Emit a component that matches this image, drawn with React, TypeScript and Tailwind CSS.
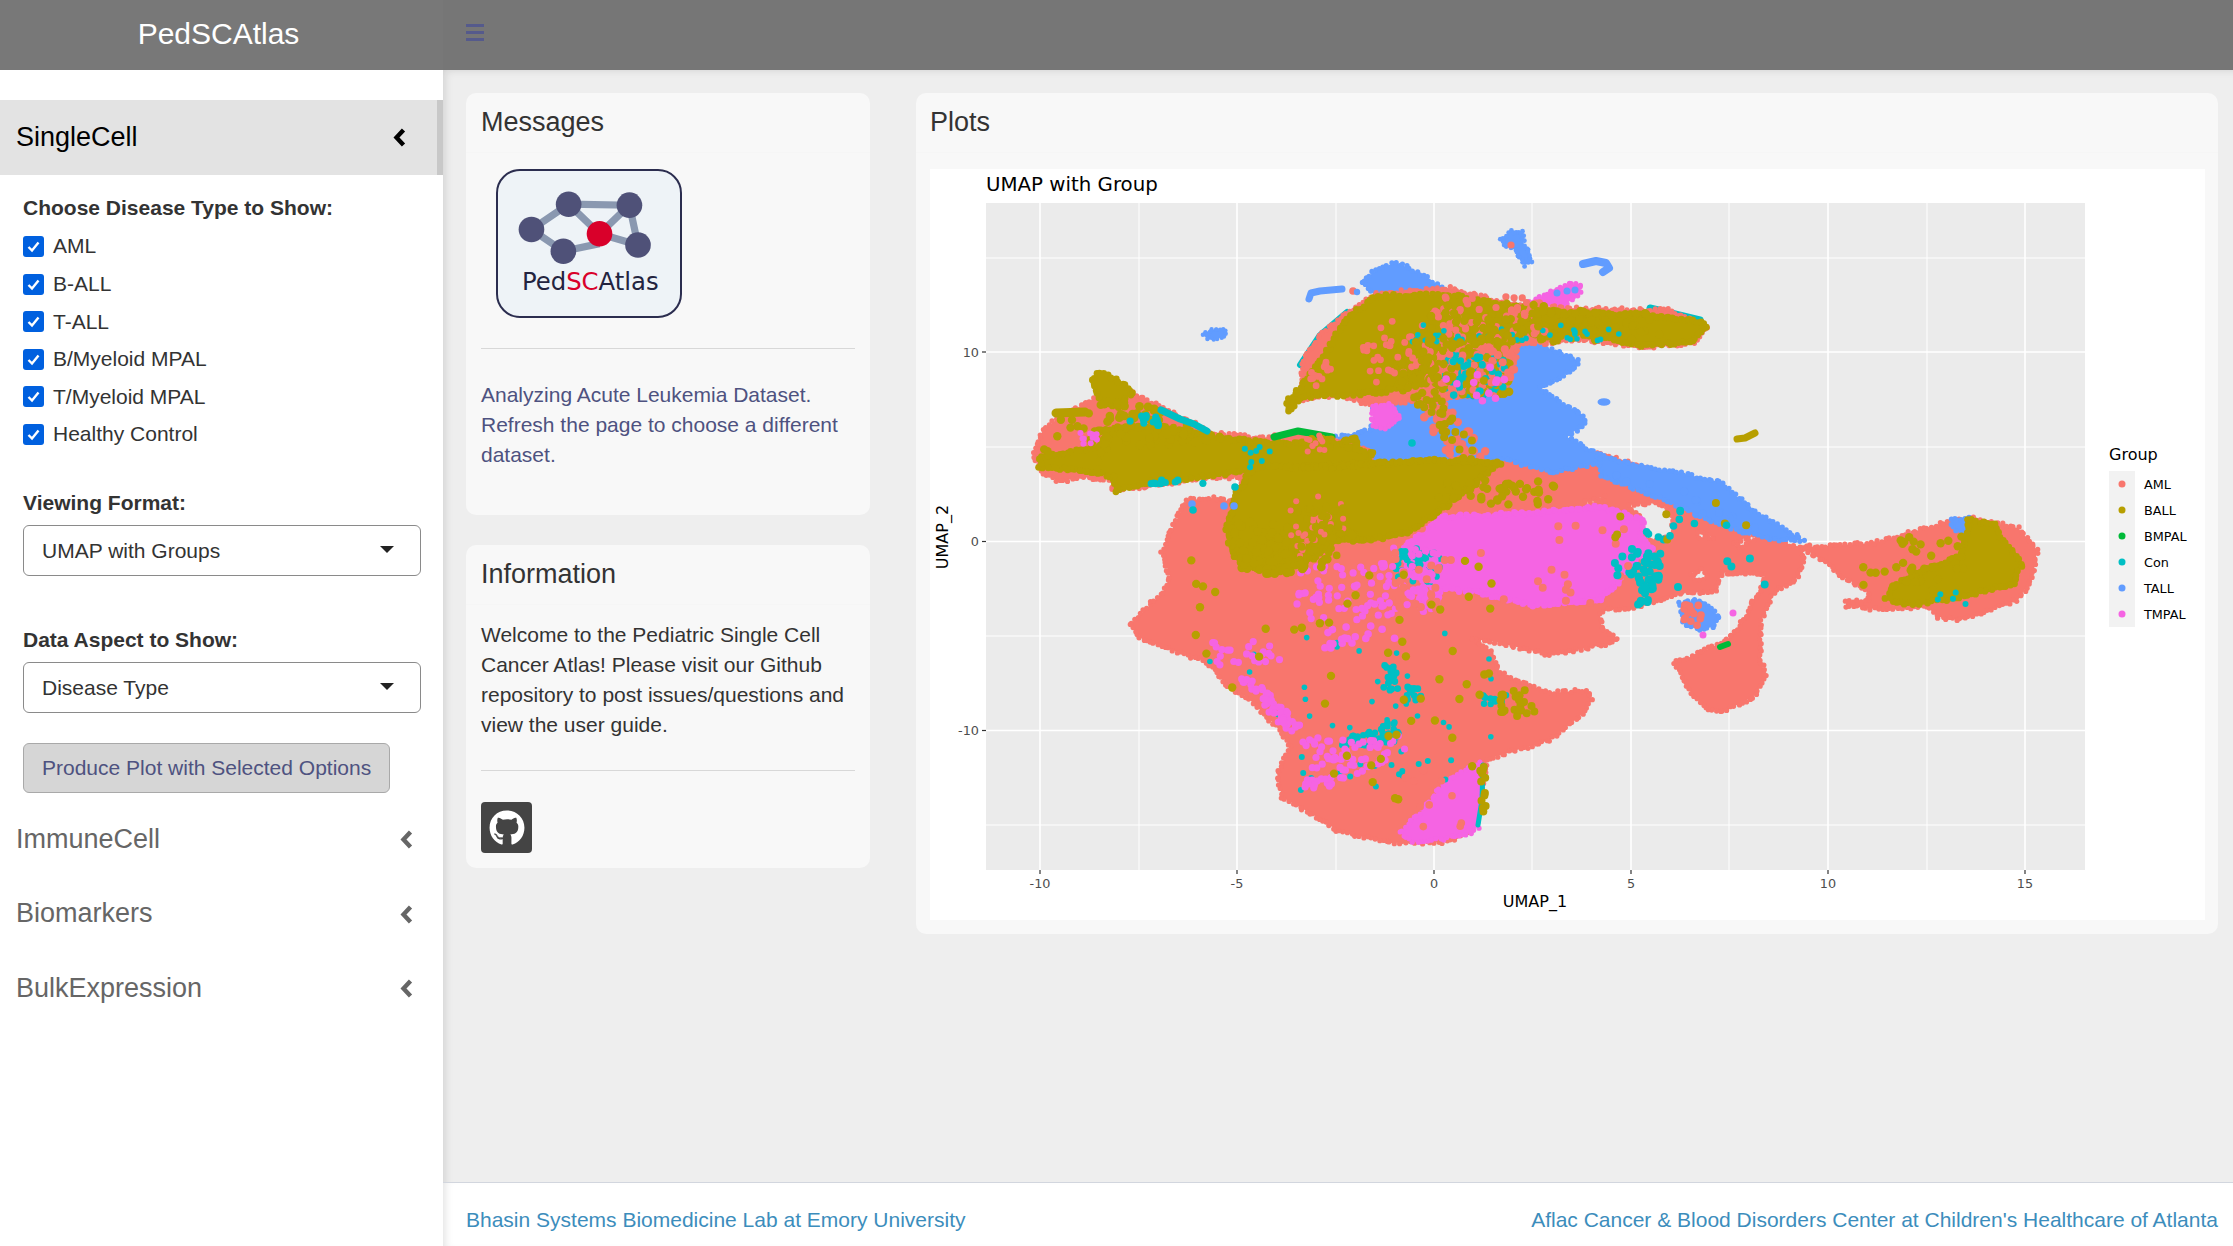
import React from "react";
import { FaGithub } from "react-icons/fa";

type Pt = [number, number];
const CORAL = "#F8766D";
const OLIVE = "#B79F00";
const GREEN = "#00BA38";
const TEAL = "#00BFC4";
const BLUE = "#619CFF";
const PINK = "#F564E3";

function rng(seed: number) {
  let a = seed;
  return () => {
    a |= 0;
    a = (a + 0x6d2b79f5) | 0;
    let t = Math.imul(a ^ (a >>> 15), 1 | a);
    t = (t + Math.imul(t ^ (t >>> 7), 61 | t)) ^ t;
    return ((t ^ (t >>> 14)) >>> 0) / 4294967296;
  };
}
const rand = rng(20240);
const inside = (p: Pt, poly: Pt[]) => {
  let c = false;
  for (let i = 0, j = poly.length - 1; i < poly.length; j = i++) {
    const [xi, yi] = poly[i];
    const [xj, yj] = poly[j];
    if (yi > p[1] !== yj > p[1] && p[0] < ((xj - xi) * (p[1] - yi)) / (yj - yi) + xi) c = !c;
  }
  return c;
};
const rect = (x0: number, y0: number, x1: number, y1: number): Pt[] => [[x0, y0], [x1, y0], [x1, y1], [x0, y1]];
const toPts = (p: Pt[]) => p.map((q) => q.join(",")).join(" ");
const d = (p: Pt[]) => "M" + p.map((q) => q.join(" ")).join("L") + "Z";

function Dots({ color, area, n, r = 4.2, clip }: { color: string; area: Pt[]; n: number; r?: number; clip?: Pt[] }) {
  const xs = area.map((p) => p[0]);
  const ys = area.map((p) => p[1]);
  const x0 = Math.min(...xs), x1 = Math.max(...xs), y0 = Math.min(...ys), y1 = Math.max(...ys);
  const out: Pt[] = [];
  let guard = 0;
  while (out.length < n && guard < n * 40) {
    guard++;
    const p: Pt = [x0 + rand() * (x1 - x0), y0 + rand() * (y1 - y0)];
    if (inside(p, area) && (!clip || inside(p, clip))) out.push(p);
  }
  return (
    <g fill={color}>
      {out.map((p, i) => (
        <circle key={i} cx={p[0].toFixed(1)} cy={p[1].toFixed(1)} r={r} />
      ))}
    </g>
  );
}

function Blob({ color, pts, holes = [], r = 2.6, step = 4 }: { color: string; pts: Pt[]; holes?: Pt[][]; r?: number; step?: number }) {
  const edge: Pt[] = [];
  const walk = (poly: Pt[], jit: number) => {
    for (let i = 0; i < poly.length; i++) {
      const a = poly[i];
      const b = poly[(i + 1) % poly.length];
      const len = Math.hypot(b[0] - a[0], b[1] - a[1]);
      const k = Math.max(1, Math.round(len / step));
      for (let j = 0; j < k; j++) {
        const t = j / k;
        edge.push([a[0] + (b[0] - a[0]) * t + (rand() - 0.5) * jit, a[1] + (b[1] - a[1]) * t + (rand() - 0.5) * jit]);
      }
    }
  };
  walk(pts, 3);
  holes.forEach((h) => walk(h, 3));
  return (
    <g fill={color}>
      <path d={d(pts) + holes.map(d).join("")} fillRule="evenodd" />
      {edge.map((p, i) => (
        <circle key={i} cx={p[0].toFixed(1)} cy={p[1].toFixed(1)} r={r} />
      ))}
    </g>
  );
}

const Strip = ({ color, pts, w }: { color: string; pts: Pt[]; w: number }) => (
  <polyline points={toPts(pts)} fill="none" stroke={color} strokeWidth={w} strokeLinecap="round" strokeLinejoin="round" />
);

const mainCoral: Pt[] = [
  [1187, 500], [1213, 498], [1240, 503], [1240, 470], [1380, 450], [1500, 460], [1597, 452], [1650, 470], [1700, 490], [1740, 510], [1790, 545], [1803, 547],
  [1803, 567], [1793, 583], [1776, 590], [1761, 620], [1761, 663], [1767, 677], [1753, 697], [1727, 710], [1708, 710], [1689, 690], [1680, 673], [1674, 663],
  [1695, 655], [1727, 640], [1742, 623], [1753, 600], [1760, 590], [1765, 575], [1722, 572], [1715, 592], [1683, 593], [1660, 600], [1633, 608], [1607, 610],
  [1600, 615], [1602, 630], [1617, 638], [1613, 643], [1550, 655], [1487, 640], [1473, 640], [1490, 650], [1500, 673], [1550, 693], [1586, 690], [1592, 700],
  [1585, 712], [1550, 740], [1494, 757], [1487, 760], [1480, 797], [1473, 830], [1447, 842], [1390, 843], [1340, 832], [1317, 817], [1282, 797], [1277, 773],
  [1290, 747], [1282, 733], [1273, 723], [1247, 697], [1225, 685], [1220, 675], [1207, 662], [1143, 640], [1130, 625], [1163, 592], [1170, 577], [1162, 552],
  [1170, 533], [1178, 517],
];
const holes: Pt[][] = [
  [[1630, 505], [1650, 503], [1667, 507], [1672, 520], [1673, 532], [1660, 541], [1645, 538], [1642, 520]],
  [[1697, 532], [1708, 534], [1712, 538], [1700, 537]],
  [[1690, 573], [1702, 570], [1708, 578], [1695, 581]],
  [[1484, 507], [1494, 506], [1490, 510]],
  [[1585, 502], [1606, 496], [1604, 500], [1590, 505]],
  [[1734, 544], [1752, 534], [1756, 537], [1740, 548]],
];
const leftCoral: Pt[] = [
  [1033, 453], [1043, 430], [1060, 417], [1097, 397], [1133, 393], [1173, 413], [1213, 433], [1260, 438], [1300, 433], [1333, 440], [1373, 453], [1367, 467],
  [1253, 477], [1200, 478], [1147, 487], [1113, 490], [1113, 480], [1080, 477], [1060, 482], [1043, 473],
];
const leftOlive: Pt[] = [
  [1040, 457], [1100, 447], [1113, 427], [1167, 427], [1217, 437], [1267, 443], [1333, 443], [1373, 453], [1367, 463], [1253, 470], [1200, 477], [1140, 483],
  [1117, 492], [1113, 477], [1083, 470], [1040, 467],
];
const head: Pt[] = [[1092, 380], [1100, 372], [1123, 383], [1133, 393], [1117, 407], [1100, 397]];
const wingCoral: Pt[] = [
  [1302, 380], [1302, 360], [1320, 335], [1347, 313], [1377, 293], [1450, 288], [1507, 303], [1567, 308], [1667, 310], [1707, 327], [1693, 343], [1647, 347],
  [1583, 340], [1520, 345], [1505, 392], [1440, 398], [1400, 402], [1370, 405], [1340, 395], [1300, 400],
];
const wingOlive: Pt[] = [
  [1288, 412], [1287, 403], [1300, 387], [1325, 355], [1347, 318], [1377, 296], [1420, 295], [1450, 295], [1500, 305], [1560, 312], [1640, 315], [1700, 322],
  [1707, 328], [1690, 342], [1640, 345], [1590, 335], [1540, 330], [1500, 335], [1440, 335], [1430, 370], [1385, 392], [1340, 395], [1300, 397],
];
const centerOlive: Pt[] = [
  [1237, 493], [1253, 467], [1333, 467], [1433, 460], [1500, 463], [1450, 503], [1407, 533], [1367, 540], [1333, 540], [1317, 557], [1277, 570], [1247, 567],
  [1233, 553], [1227, 530],
];
const mainBlue: Pt[] = [
  [1507, 347], [1540, 345], [1577, 360], [1579, 365], [1560, 377], [1540, 388], [1560, 402], [1583, 415], [1585, 423], [1567, 437], [1597, 453], [1600, 463],
  [1553, 472], [1507, 460], [1433, 460], [1400, 463], [1340, 457], [1337, 437], [1370, 430], [1377, 420], [1373, 407], [1393, 397], [1450, 387],
];
const bandBlue: Pt[] = [[1600, 455], [1640, 466], [1680, 473], [1720, 482], [1753, 510], [1803, 540], [1770, 540], [1716, 523], [1663, 500], [1600, 475]];
const rightCoral: Pt[] = [
  [1803, 547], [1825, 546], [1874, 543], [1943, 523], [1973, 518], [2018, 528], [2037, 550], [2033, 577], [2018, 600], [1961, 620], [1939, 617], [1927, 607],
  [1886, 610], [1846, 606], [1846, 602], [1870, 601], [1866, 590], [1840, 575], [1830, 565], [1815, 556],
];
const rightOlive: Pt[] = [
  [1886, 597], [1897, 583], [1924, 570], [1961, 557], [1969, 520], [1995, 525], [2003, 540], [2022, 563], [2014, 583], [1980, 592], [1943, 600], [1920, 603], [1897, 603],
];
const mainPink: Pt[] = [
  [1437, 517], [1533, 513], [1600, 507], [1643, 520], [1640, 537], [1653, 550], [1633, 560], [1617, 583], [1600, 600], [1533, 605], [1480, 593], [1433, 587],
  [1410, 573], [1403, 547], [1427, 530],
];
const lowPink: Pt[] = [[1480, 763], [1478, 827], [1467, 835], [1417, 843], [1400, 833], [1420, 813], [1447, 780]];

function Cluster() {
  return (
    <g>
      <Strip color={TEAL} pts={[[1300, 365], [1320, 335], [1347, 312]]} w={6} />
      <Strip color={TEAL} pts={[[1650, 308], [1700, 320]]} w={7} />
      <Blob color={BLUE} pts={[[1204, 333], [1212, 330], [1226, 330], [1226, 334], [1218, 339], [1208, 339], [1204, 336]]} r={2.2} step={3} />
      <Strip color={BLUE} pts={[[1309, 299], [1311, 293], [1320, 291], [1342, 289]]} w={7} />
      <circle cx={1353} cy={291} r={3.8} fill={CORAL} />
      <circle cx={1357} cy={292} r={3.2} fill={BLUE} />
      <Blob color={BLUE} pts={[[1500, 240], [1510, 232], [1522, 231], [1524, 245], [1530, 255], [1531, 262], [1525, 265], [1521, 260], [1515, 250], [1505, 244]]} r={2.4} step={3} />
      <circle cx={1511} cy={245} r={3.6} fill={CORAL} />
      <Strip color={BLUE} pts={[[1583, 264], [1596, 261], [1606, 263], [1609, 268], [1603, 272]]} w={8} />
      <ellipse cx={1604} cy={402} rx={6.5} ry={3.8} fill={BLUE} />
      <Strip color={OLIVE} pts={[[1737, 439], [1745, 438], [1755, 433]]} w={7} />
      <Blob color={BLUE} pts={[[1362, 283], [1370, 275], [1380, 268], [1395, 263], [1410, 268], [1430, 280], [1445, 290], [1440, 300], [1380, 300]]} />
      <Blob color={PINK} pts={[[1530, 303], [1550, 292], [1565, 285], [1580, 284], [1581, 292], [1565, 305]]} />
      <circle cx={1557} cy={293} r={3.5} fill={BLUE} />
      <circle cx={1567} cy={291} r={3.5} fill={BLUE} />
      <circle cx={1575} cy={290} r={3.5} fill={BLUE} />
      <Blob color={CORAL} pts={mainCoral} holes={holes} />
      <Blob color={BLUE} pts={mainBlue} />
      <Blob color={BLUE} pts={bandBlue} />
      <Blob color={BLUE} pts={[[1680, 603], [1700, 600], [1720, 617], [1712, 627], [1700, 630], [1685, 625]]} />
      <Dots color={CORAL} area={rect(1683, 603, 1708, 626)} n={16} r={3.8} />
      <Blob color={CORAL} pts={leftCoral} />
      <Blob color={CORAL} pts={wingCoral} />
      <Blob color={CORAL} pts={rightCoral} />
      <Blob color={BLUE} pts={[[1950, 520], [1968, 517], [1972, 530], [1956, 532]]} />
      <Dots color={CORAL} area={[[1413, 400], [1440, 395], [1487, 452], [1480, 470], [1455, 466]]} n={50} r={4.2} />
      <Blob color={PINK} pts={[[1372, 407], [1388, 403], [1400, 418], [1385, 428], [1373, 425]]} />
      <Blob color={PINK} pts={mainPink} r={3.2} />
      <Blob color={PINK} pts={lowPink} />
      <Strip color={TEAL} pts={[[1483, 765], [1482, 800], [1478, 825]]} w={5} />
      <Dots color={TEAL} area={rect(1394, 547, 1440, 582)} n={44} r={3.4} />
      <Dots color={TEAL} area={rect(1627, 552, 1663, 580)} n={34} r={4} />
      <Dots color={TEAL} area={rect(1637, 582, 1653, 606)} n={16} r={4} />
      <Dots color={TEAL} area={rect(1440, 353, 1505, 397)} n={50} r={3.8} />
      <Dots color={TEAL} area={rect(1383, 664, 1398, 692)} n={20} r={3.4} />
      <Dots color={TEAL} area={rect(1407, 687, 1423, 700)} n={14} r={3.4} />
      <Dots color={TEAL} area={[[1330, 745], [1385, 722], [1407, 722], [1395, 745], [1345, 750]]} n={60} r={3.2} />
      <Dots color={TEAL} area={rect(1483, 695, 1507, 705)} n={14} r={3.2} />
      <Dots color={TEAL} area={rect(1300, 750, 1470, 790)} n={18} r={3} clip={mainCoral} />
      <Dots color={TEAL} area={rect(1190, 630, 1500, 740)} n={28} r={2.8} clip={mainCoral} />
      <Dots color={PINK} area={rect(1297, 563, 1393, 620)} n={65} r={3.6} clip={mainCoral} />
      <Dots color={PINK} area={rect(1320, 620, 1395, 650)} n={18} r={3.8} clip={mainCoral} />
      <Dots color={PINK} area={[[1300, 738], [1400, 735], [1405, 750], [1340, 785], [1305, 790]]} n={80} r={3.6} clip={mainCoral} />
      <Dots color={PINK} area={[[1233, 673], [1250, 673], [1300, 725], [1290, 735]]} n={50} r={3.6} clip={mainCoral} />
      <Dots color={PINK} area={rect(1205, 640, 1280, 665)} n={24} r={3.6} clip={mainCoral} />
      <Dots color={PINK} area={rect(1393, 547, 1440, 612)} n={60} r={3.6} clip={mainCoral} />
      <Dots color={CORAL} area={rect(1420, 525, 1640, 605)} n={24} r={4} />
      <Dots color={CORAL} area={rect(1393, 547, 1440, 612)} n={18} r={4} />
      <Dots color={CORAL} area={rect(1400, 770, 1470, 830)} n={10} r={3.8} />
      <Dots color={TEAL} area={rect(1610, 535, 1780, 600)} n={14} r={4} clip={mainCoral} />
      <Dots color={BLUE} area={[[1600, 470], [1720, 500], [1765, 535], [1700, 515]]} n={14} r={4} />
      <Dots color={OLIVE} area={[[1080, 450], [1380, 450], [1380, 470], [1080, 470]]} n={60} r={4.2} />
      <Blob color={OLIVE} pts={leftOlive} r={3.4} />
      <Blob color={OLIVE} pts={head} r={3.4} />
      <Strip color={OLIVE} pts={[[1056, 413], [1085, 412]]} w={9} />
      <Dots color={OLIVE} area={[[1090, 405], [1135, 398], [1230, 440], [1090, 450]]} n={65} r={4.4} />
      <Dots color={OLIVE} area={[[1042, 425], [1110, 400], [1110, 465], [1042, 470]]} n={22} r={4.2} />
      <Dots color={PINK} area={rect(1078, 432, 1098, 445)} n={10} r={3} />
      <Dots color={TEAL} area={rect(1130, 410, 1165, 428)} n={12} r={3.6} />
      <Dots color={TEAL} area={rect(1135, 480, 1210, 484)} n={9} r={3.6} />
      <Strip color={TEAL} pts={[[1161, 410], [1180, 419], [1194, 424], [1207, 431]]} w={7} />
      <Strip color={GREEN} pts={[[1274, 437], [1298, 431], [1332, 437]]} w={7} />
      <Dots color={OLIVE} area={rect(1310, 438, 1372, 450)} n={24} r={4} />
      <Dots color={CORAL} area={rect(1303, 433, 1325, 452)} n={12} r={3} />
      <Blob color={OLIVE} pts={centerOlive} r={3.6} />
      <Dots color={OLIVE} area={[[1225, 520], [1360, 530], [1320, 570], [1240, 578]]} n={110} r={4.4} />
      <Dots color={CORAL} area={[[1290, 495], [1345, 495], [1345, 545], [1290, 560]]} n={30} r={3} />
      <Dots color={OLIVE} area={rect(1295, 500, 1345, 560)} n={26} r={3.8} />
      <Dots color={OLIVE} area={rect(1430, 480, 1560, 505)} n={45} r={4.2} />
      <Dots color={TEAL} area={rect(1240, 440, 1290, 470)} n={8} r={3} />
      <Blob color={OLIVE} pts={wingOlive} r={3.4} />
      <Dots color={OLIVE} area={rect(1440, 308, 1660, 342)} n={130} r={4.2} />
      <Dots color={OLIVE} area={rect(1395, 335, 1510, 395)} n={120} r={4.2} />
      <Dots color={CORAL} area={[[1305, 378], [1330, 355], [1335, 372], [1316, 386]]} n={16} r={3.4} />
      <Dots color={CORAL} area={[[1345, 350], [1385, 318], [1430, 325], [1425, 365], [1375, 385]]} n={38} r={3.4} />
      <Dots color={CORAL} area={rect(1430, 296, 1545, 335)} n={60} r={3.6} />
      <Dots color={CORAL} area={rect(1430, 335, 1510, 395)} n={40} r={3.8} />
      <Dots color={TEAL} area={rect(1410, 325, 1620, 342)} n={40} r={2.8} />
      <Dots color={TEAL} area={rect(1450, 355, 1505, 392)} n={26} r={3.6} />
      <Dots color={OLIVE} area={rect(1430, 300, 1545, 345)} n={50} r={4.2} />
      <Dots color={OLIVE} area={rect(1400, 340, 1490, 392)} n={34} r={4.2} />
      <Dots color={CORAL} area={rect(1490, 345, 1515, 385)} n={12} r={4} />
      <Dots color={PINK} area={rect(1440, 365, 1520, 405)} n={12} r={3.8} />
      <Dots color={OLIVE} area={[[1410, 395], [1440, 395], [1490, 460], [1470, 470]]} n={30} r={4} />
      <Blob color={OLIVE} pts={rightOlive} r={3.4} />
      <Dots color={OLIVE} area={rect(1850, 562, 1940, 590)} n={18} r={4.2} clip={rightCoral} />
      <Dots color={OLIVE} area={rect(1900, 535, 1970, 570)} n={16} r={4.2} />
      <Dots color={TEAL} area={rect(1930, 590, 1970, 605)} n={5} r={3} />
      <Dots color={OLIVE} area={rect(1190, 560, 1500, 700)} n={40} r={4.2} clip={mainCoral} />
      <Dots color={OLIVE} area={rect(1500, 690, 1535, 720)} n={24} r={4} />
      <Dots color={OLIVE} area={rect(1300, 700, 1480, 830)} n={14} r={4.2} clip={mainCoral} />
      <Dots color={OLIVE} area={rect(1480, 765, 1486, 815)} n={12} r={4} />
      <Dots color={OLIVE} area={rect(1600, 490, 1770, 540)} n={8} r={4} clip={mainCoral} />
      <Dots color={TEAL} area={rect(1640, 510, 1740, 540)} n={10} r={3.8} clip={mainCoral} />
      <circle cx={1192} cy={504} r={3.8} fill={BLUE} />
      <circle cx={1193} cy={510} r={3.8} fill={TEAL} />
      <circle cx={1224} cy={506} r={3.8} fill={BLUE} />
      <circle cx={1234} cy={506} r={3.8} fill={BLUE} />
      <circle cx={1235} cy={487} r={3.8} fill={TEAL} />
      <circle cx={1412} cy={443} r={3.8} fill={TEAL} />
      <Strip color={GREEN} pts={[[1720, 647], [1728, 644]]} w={6} />
      <circle cx={1703} cy={635} r={3.5} fill={PINK} />
      <circle cx={1733} cy={613} r={3.5} fill={PINK} />
    </g>
  );
}

function Plot() {
  const xTicks: [number, string][] = [[1040, "-10"], [1237, "-5"], [1434, "0"], [1631, "5"], [1828, "10"], [2025, "15"]];
  const xMinor = [1139, 1336, 1532, 1729, 1927];
  const yTicks: [number, string][] = [[352, "10"], [541.5, "0"], [730.5, "-10"]];
  const yMinor = [258, 447, 636, 825];
  const legend: [string, string][] = [["AML", CORAL], ["BALL", OLIVE], ["BMPAL", GREEN], ["Con", TEAL], ["TALL", BLUE], ["TMPAL", PINK]];
  const font = "'DejaVu Sans', sans-serif";
  return (
    <svg viewBox="930 169 1275 751" className="w-[1275px] h-[751px] block bg-white" fontFamily={font}>
      <text x={986} y={191} fontSize={19.8} fill="#000">UMAP with Group</text>
      <rect x={986} y={203} width={1099} height={667} fill="#EBEBEB" />
      <clipPath id="panel"><rect x={986} y={203} width={1099} height={667} /></clipPath>
      <g clipPath="url(#panel)">
        {xMinor.map((x) => <line key={x} x1={x} x2={x} y1={203} y2={870} stroke="#fff" strokeWidth={1} />)}
        {yMinor.map((y) => <line key={y} y1={y} y2={y} x1={986} x2={2085} stroke="#fff" strokeWidth={1} />)}
        {xTicks.map(([x]) => <line key={x} x1={x} x2={x} y1={203} y2={870} stroke="#fff" strokeWidth={1.6} />)}
        {yTicks.map(([y]) => <line key={y} y1={y} y2={y} x1={986} x2={2085} stroke="#fff" strokeWidth={1.6} />)}
        <Cluster />
      </g>
      {xTicks.map(([x, t]) => (
        <g key={x}>
          <line x1={x} x2={x} y1={870} y2={874} stroke="#333" strokeWidth={1.2} />
          <text x={x} y={888} fontSize={12.8} fill="#4D4D4D" textAnchor="middle">{t}</text>
        </g>
      ))}
      {yTicks.map(([y, t]) => (
        <g key={y}>
          <line x1={982} x2={986} y1={y} y2={y} stroke="#333" strokeWidth={1.2} />
          <text x={979} y={y + 4.5} fontSize={12.8} fill="#4D4D4D" textAnchor="end">{t}</text>
        </g>
      ))}
      <text x={1535} y={907} fontSize={16} fill="#000" textAnchor="middle">UMAP_1</text>
      <text x={948} y={537} fontSize={16} fill="#000" textAnchor="middle" transform="rotate(-90 948 537)">UMAP_2</text>
      <text x={2109} y={460} fontSize={16} fill="#000">Group</text>
      <rect x={2109} y={471} width={26} height={156} fill="#F2F2F2" />
      {legend.map(([name, c], i) => (
        <g key={name}>
          <circle cx={2122} cy={484 + i * 26} r={3.5} fill={c} />
          <text x={2144} y={488.5 + i * 26} fontSize={12.8} fill="#000">{name}</text>
        </g>
      ))}
    </svg>
  );
}

function Logo() {
  return (
    <div className="ml-[15px] w-[186px] h-[149px] rounded-[24px] border-2 border-[#2b2d4f] bg-[#eef3f7] overflow-hidden">
      <svg viewBox="141 271 552 441" className="w-full h-full block">
        <g stroke="#8a98b0" strokeWidth="22" fill="none">
          <path d="M355 372L540 375L566 496L449 462L355 372Z" />
          <path d="M355 372L242 449L339 515L449 492" />
          <path d="M540 375L449 462" />
        </g>
        <g fill="#4f5178">
          <circle cx="355" cy="372" r="39" />
          <circle cx="540" cy="375" r="39" />
          <circle cx="242" cy="449" r="39" />
          <circle cx="339" cy="515" r="39" />
          <circle cx="566" cy="496" r="39" />
        </g>
        <circle cx="449" cy="462" r="39" fill="#d9002a" />
        <text x="213" y="634" fontSize="74" fontFamily="'DejaVu Sans', sans-serif" fill="#23243f">
          Ped<tspan fill="#d9002a">SC</tspan>Atlas
        </text>
      </svg>
    </div>
  );
}

const Chevron = ({ color }: { color: string }) => (
  <svg width="13" height="19" viewBox="0 0 13 19" className="block mt-[2px]">
    <polyline points="10.5,2 3.5,9.5 10.5,17" fill="none" stroke={color} strokeWidth="4.4" />
  </svg>
);

function Check({ label }: { label: string }) {
  return (
    <div className="h-[37.6px] flex items-center gap-[9px]">
      <span className="w-[21px] h-[21px] rounded-[3px] bg-[#0060df] flex items-center justify-center">
        <svg width="15" height="15" viewBox="0 0 15 15">
          <polyline points="2.5,8 6,11.5 12.5,3.5" fill="none" stroke="#fff" strokeWidth="2.4" />
        </svg>
      </span>
      <span>{label}</span>
    </div>
  );
}

function Select({ value, className }: { value: string; className: string }) {
  return (
    <div className={"w-[398px] h-[51px] rounded-[6px] border border-[#8a8a8a] bg-white pl-[18px] pr-[26px] flex items-center justify-between " + className}>
      <span>{value}</span>
      <span className="w-0 h-0 border-x-[7px] border-x-transparent border-t-[7px] border-t-[#222] -mt-[3px]" />
    </div>
  );
}

function NavItem({ label }: { label: string }) {
  return (
    <div className="h-[74.7px] pl-4 pr-[30px] flex items-center justify-between text-[27px] text-[#666]">
      <span>{label}</span>
      <Chevron color="#666" />
    </div>
  );
}

function Card({ title, className, children }: { title: string; className: string; children: React.ReactNode }) {
  return (
    <section className={"bg-[#f8f8f8] rounded-[10px] " + className}>
      <h3 className="h-[60px] px-[15px] pb-[2px] flex items-center text-[27px] text-[#333] border-b border-[#f6f6f6]">{title}</h3>
      {children}
    </section>
  );
}

export default function App() {
  return (
    <div className="w-full h-screen overflow-hidden flex flex-col bg-white text-[21px] leading-[30px] text-[#333] [font-family:'Liberation_Sans',Arial,sans-serif]">
      <header className="h-[70px] shrink-0 flex bg-[#767676] relative z-10">
        <div className="w-[443px] bg-[#787878] flex items-center justify-center text-[30px] text-white pr-[6px] pb-[2px]">PedSCAtlas</div>
        <div className="flex-1 pl-[23px] pb-[6px] flex flex-col justify-center gap-[4px]">
          <span className="block w-[18px] h-[3px] bg-[#555a8c]" />
          <span className="block w-[18px] h-[3px] bg-[#555a8c]" />
          <span className="block w-[18px] h-[3px] bg-[#555a8c]" />
        </div>
      </header>
      <div className="flex-1 flex min-h-0">
        <aside className="w-[443px] shrink-0 bg-white pt-[30px]">
          <div className="h-[75px] bg-[#e3e3e3] border-r-[6px] border-[#c8c8c8] pl-4 pr-[31px] pb-[2px] flex items-center justify-between text-[27px] text-black">
            <span>SingleCell</span>
            <Chevron color="#000" />
          </div>
          <div className="pl-[23px]">
            <div className="mt-[18px] mb-[4.7px] font-bold">Choose Disease Type to Show:</div>
            {["AML", "B-ALL", "T-ALL", "B/Myeloid MPAL", "T/Myeloid MPAL", "Healthy Control"].map((l) => (
              <Check key={l} label={l} />
            ))}
            <div className="mt-[35px] font-bold">Viewing Format:</div>
            <Select value="UMAP with Groups" className="mt-[7px]" />
            <div className="mt-[49px] font-bold">Data Aspect to Show:</div>
            <Select value="Disease Type" className="mt-[7px]" />
            <div className="mt-[30px] w-[367px] h-[50px] rounded-[6px] border border-[#a9a9a9] bg-[#d6d6d6] flex items-center pl-[18px] text-[#4e5280]">
              Produce Plot with Selected Options
            </div>
          </div>
          <div className="mt-[8px]">
            <NavItem label="ImmuneCell" />
            <NavItem label="Biomarkers" />
            <NavItem label="BulkExpression" />
          </div>
        </aside>
        <div className="flex-1 min-w-0 flex flex-col">
          <main className="flex-1 min-h-0 bg-[#eeeeee] pl-[23px] pr-[15px] pt-[23px] flex gap-[46px] items-start shadow-[inset_8px_6px_8px_-6px_rgba(0,0,0,0.12)]">
            <div className="w-[404px] shrink-0 flex flex-col gap-[30px]">
              <Card title="Messages" className="h-[422px]">
                <div className="px-[15px] pt-[16px]">
                  <Logo />
                  <hr className="mt-[30px] border-t border-[#d8d8d8]" />
                  <p className="mt-[31px] text-[#4e5280]">
                    Analyzing Acute Leukemia Dataset.
                    <br />
                    Refresh the page to choose a different
                    <br />
                    dataset.
                  </p>
                </div>
              </Card>
              <Card title="Information" className="h-[323px]">
                <div className="px-[15px] pt-[15px]">
                  <p>
                    Welcome to the Pediatric Single Cell
                    <br />
                    Cancer Atlas! Please visit our Github
                    <br />
                    repository to post issues/questions and
                    <br />
                    view the user guide.
                  </p>
                  <hr className="mt-[30px] border-t border-[#d8d8d8]" />
                  <div className="mt-[31px] w-[51px] h-[51px] rounded-[4px] bg-[#444] flex items-center justify-center">
                    <FaGithub className="text-white w-[36px] h-[36px]" />
                  </div>
                </div>
              </Card>
            </div>
            <Card title="Plots" className="flex-1 min-w-0 h-[841px] [&>h3]:px-[14px]">
              <div className="pl-[14px] pt-[16px]">
                <Plot />
              </div>
            </Card>
          </main>
          <footer className="h-[64px] shrink-0 bg-white border-t border-[#d2d6de] pl-[23px] pr-[15px] pt-[22px] flex justify-between text-[#3c8dbc] shadow-[inset_8px_0_8px_-6px_rgba(0,0,0,0.12)]">
            <span>Bhasin Systems Biomedicine Lab at Emory University</span>
            <span>Aflac Cancer &amp; Blood Disorders Center at Children&apos;s Healthcare of Atlanta</span>
          </footer>
        </div>
      </div>
    </div>
  );
}
